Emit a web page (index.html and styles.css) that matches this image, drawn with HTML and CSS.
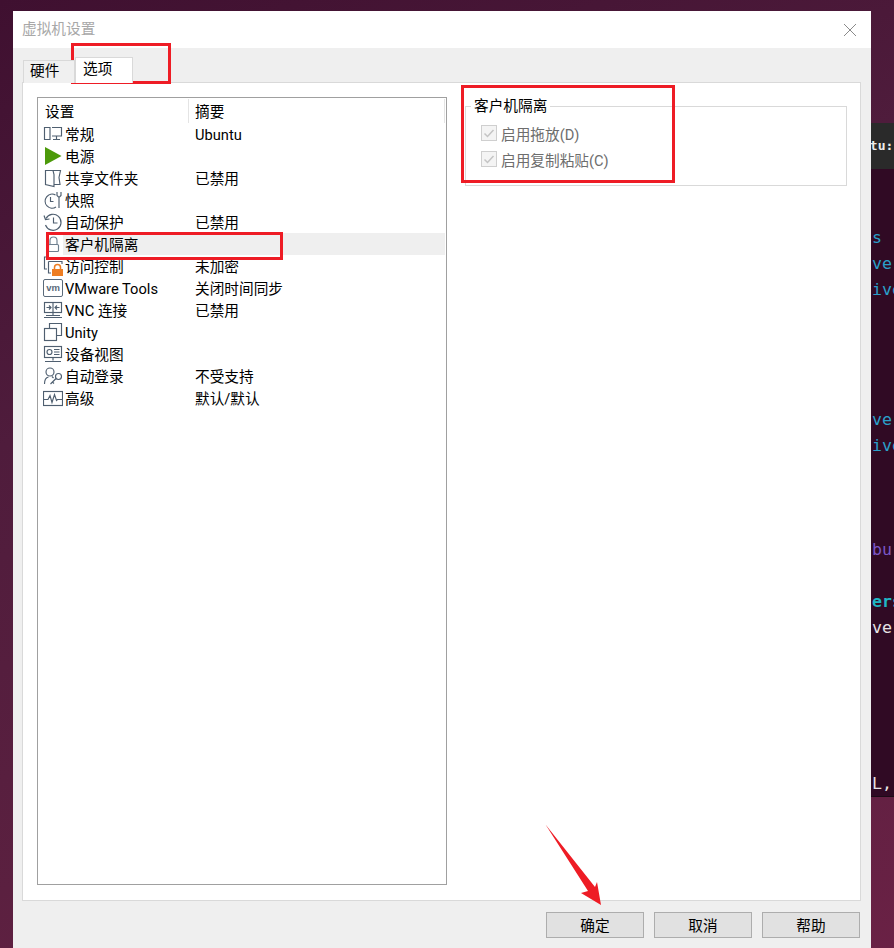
FILE: index.html
```html
<!DOCTYPE html>
<html lang="zh">
<head>
<meta charset="utf-8">
<title>虚拟机设置</title>
<link rel="stylesheet" href="styles.css">
</head>
<body>
<div class="desktop">
  <div class="terminal">
    <div class="term-title">ntu:</div>
    <div class="term-body">
      <div class="tl c-blue">s</div>
      <div class="tl c-blue">ver</div>
      <div class="tl c-blue">ive</div>
      <div class="tl"></div><div class="tl"></div><div class="tl"></div><div class="tl"></div>
      <div class="tl c-blue">ver</div>
      <div class="tl c-blue">ive</div>
      <div class="tl"></div><div class="tl"></div><div class="tl"></div>
      <div class="tl c-purple">bur</div>
      <div class="tl"></div>
      <div class="tl c-cyan">ers</div>
      <div class="tl c-white">ve</div>
      <div class="tl"></div><div class="tl"></div><div class="tl"></div><div class="tl"></div><div class="tl"></div>
      <div class="tl c-white">L,</div>
    </div>
  </div>

  <div class="dialog">
    <div class="titlebar">
      <span class="title">虚拟机设置</span>
      <svg class="close" width="14" height="14" viewBox="0 0 14 14"><path d="M1 1L13 13M13 1L1 13" stroke="#8a8a8a" stroke-width="1" fill="none"/></svg>
    </div>
    <div class="content">
      <div class="tabs">
        <div class="tab">硬件</div>
        <div class="tab tab-active">选项</div>
      </div>
      <div class="panel">
        <div class="list">
          <div class="list-head">
            <div class="head-a">设置</div>
            <div class="head-b">摘要</div>
            <div class="head-rest"></div>
          </div>
          <div class="row">
            <svg class="ico" viewBox="0 0 20 20"><g class="ln"><path d="M1.500 3.500h5.500v12H1.500z"/><path d="M9 3.500h9.500v8.500H9"/><path d="M13.500 12v3M10 15.500h7"/></g></svg>
            <span class="name">常规</span><span class="sum">Ubuntu</span>
          </div>
          <div class="row">
            <svg class="ico" viewBox="0 0 20 20"><path d="M2 1L18.500 10L2 19Z" fill="#4c9a0a"/></svg>
            <span class="name">电源</span>
          </div>
          <div class="row">
            <svg class="ico" viewBox="0 0 20 20"><g class="ln"><path d="M10 2.500h7.500l-1.500 7 1 7h-6"/><path d="M2.500 2.500h7.500l1 4v12l-8.500-2z"/></g></svg>
            <span class="name">共享文件夹</span><span class="sum">已禁用</span>
          </div>
          <div class="row">
            <svg class="ico" viewBox="0 0 20 20"><g class="ln"><path d="M12.500 5A7 7 0 1 0 13 17"/><path d="M7.500 7v4.500h3"/><path d="M16 8v10M14 2v3.500l2 2 2-2V2"/></g></svg>
            <span class="name">快照</span>
          </div>
          <div class="row">
            <svg class="ico" viewBox="0 0 20 20"><g class="ln"><path d="M3 6.500A8 8 0 1 1 2.500 13"/><path d="M1 3.500l1.500 4 4-.5"/><path d="M10.500 5.500v5.500h4"/></g></svg>
            <span class="name">自动保护</span><span class="sum">已禁用</span>
          </div>
          <div class="row row-sel">
            <svg class="ico" viewBox="0 0 20 20"><g class="ln-soft"><rect x="5.500" y="10.500" width="10" height="7" rx="1"/><path d="M7 10.500V6.500a3.500 3.500 0 0 1 7 0v4"/></g></svg>
            <span class="name name-sel">客户机隔离</span>
          </div>
          <div class="row">
            <svg class="ico" viewBox="0 0 20 20"><g class="ln"><path d="M4.500 1H1.500V13H4"/><path d="M5.500 5.500H19V8"/><path d="M5.500 5.500V17H8"/></g><rect x="9" y="13" width="11" height="7" fill="#ee7d22"/><path d="M11.500 13V11.500a3 3 0 0 1 6 0V13" fill="none" stroke="#ee7d22" stroke-width="1.500"/></svg>
            <span class="name">访问控制</span><span class="sum">未加密</span>
          </div>
          <div class="row">
            <svg class="ico" viewBox="0 0 20 20"><rect x="0.500" y="1.500" width="19" height="17" rx="1.500" fill="#fff" stroke="#5a6a7a"/><text x="10" y="13" class="vm">vm</text></svg>
            <span class="name">VMware Tools</span><span class="sum">关闭时间同步</span>
          </div>
          <div class="row">
            <svg class="ico" viewBox="0 0 20 20"><g class="ln"><rect x="1.500" y="2.500" width="17" height="10"/><path d="M10 2.500v10M3.500 7.500h4.500M6 5.500l2 2-2 2M16.500 7.500h-4.500M14 5.500l-2 2 2 2M10 12.500v3M1 17.500h18M3 15.500h14"/></g></svg>
            <span class="name">VNC 连接</span><span class="sum">已禁用</span>
          </div>
          <div class="row">
            <svg class="ico" viewBox="0 0 20 20"><g class="ln"><rect x="1.500" y="6.500" width="12" height="12"/><path d="M6.500 6.500V1.500h12v12h-5"/></g></svg>
            <span class="name">Unity</span>
          </div>
          <div class="row">
            <svg class="ico" viewBox="0 0 20 20"><g class="ln"><rect x="1.500" y="2.500" width="17" height="11"/><circle cx="6.500" cy="8" r="2.500"/><path d="M11 5.500h5.500M11 8h5.500M11 10.500h5.500M10 13.500v3M2 17.500h16"/></g></svg>
            <span class="name">设备视图</span>
          </div>
          <div class="row">
            <svg class="ico" viewBox="0 0 20 20"><g class="ln"><circle cx="7" cy="6" r="4"/><path d="M1.500 18c0-4 1.500-6.500 4-7M9 10.500l1.500 1.500"/><circle cx="15.500" cy="10.500" r="3"/><path d="M13 12.500L7.500 18M9.500 16l1.500 1.500"/></g></svg>
            <span class="name">自动登录</span><span class="sum">不受支持</span>
          </div>
          <div class="row">
            <svg class="ico" viewBox="0 0 20 20"><g class="ln"><rect x="0.500" y="3.500" width="19" height="14"/><path d="M1 11.500h4l2-4 2 7 2.500-8 2 6 1-1H19"/></g></svg>
            <span class="name">高级</span><span class="sum">默认/默认</span>
          </div>
        </div>
        <div class="side">
          <fieldset class="group">
            <legend class="legend">客户机隔离</legend>
            <label class="check"><span class="box"><svg width="14" height="14" viewBox="0 0 14 14"><path d="M2.500 7.500L5.500 10.500L11.500 4" fill="none" stroke="#c4c4c4" stroke-width="1.500"/></svg></span>启用拖放(D)</label>
            <label class="check"><span class="box"><svg width="14" height="14" viewBox="0 0 14 14"><path d="M2.500 7.500L5.500 10.500L11.500 4" fill="none" stroke="#c4c4c4" stroke-width="1.500"/></svg></span>启用复制粘贴(C)</label>
          </fieldset>
        </div>
      </div>
      <div class="buttons">
        <button class="btn">确定</button>
        <button class="btn">取消</button>
        <button class="btn">帮助</button>
      </div>
    </div>
  </div>

  <div class="mark mark-tab"></div>
  <div class="mark mark-row"></div>
  <div class="mark mark-group"></div>
  <svg class="arrow" width="894" height="948" viewBox="0 0 894 948"><path d="M545.500 824.500L595 887L597 882L601 905L581 893L588 891Z" fill="#ee1c25"/></svg>
</div>
</body>
</html>
```

FILE: styles.css
```css
* { box-sizing: border-box; }
html, body { margin: 0; padding: 0; }
body {
  width: 894px;
  height: 948px;
  overflow: hidden;
  font-family: "Roboto", "Noto Sans CJK SC", sans-serif;
  font-size: 14.67px;
  color: #000;
}
.desktop {
  position: relative;
  width: 894px;
  height: 948px;
  overflow: hidden;
  background: linear-gradient(160deg, #3f1030 0%, #4f1c3c 35%, #5b2040 70%, #6a2145 100%);
}
.terminal {
  position: absolute;
  left: 860px;
  top: 123px;
  width: 34px;
  height: 674px;
  background: #300a24;
  border-bottom: 1px solid #1c0a16;
  font-family: "DejaVu Sans Mono", monospace;
  font-size: 16.600px;
  overflow: hidden;
}
.term-title {
  height: 46px;
  line-height: 46px;
  padding-left: 2px;
  background: #2a2a2a;
  color: #ececec;
  font-weight: 700;
  font-size: 13px;
}
.term-body { padding-top: 56px; }
.tl { height: 26px; line-height: 26px; padding-left: 12px; white-space: nowrap; }
.c-blue { color: #2a9fc9; }
.c-purple { color: #7a56c4; }
.c-cyan { color: #1fb6c4; font-weight: 700; }
.c-white { color: #e6e2e4; }

.dialog {
  position: absolute;
  left: 13px;
  top: 11px;
  width: 858px;
  height: 937px;
  background: #efefef;
  display: flex;
  flex-direction: column;
}
.titlebar {
  height: 37px;
  flex: none;
  background: #fff;
  display: flex;
  align-items: center;
  justify-content: space-between;
  padding: 0 14px 0 9px;
}
.title { color: #a8a8a8; margin-bottom: 4px; }
.close { display: block; }
.content {
  flex: 1;
  display: flex;
  flex-direction: column;
  padding: 9px 10px 0 9px;
}
.tabs {
  height: 26px;
  flex: none;
  display: flex;
  align-items: flex-end;
  padding-left: 1px;
  position: relative;
  z-index: 1;
}
.tab {
  width: 52px;
  height: 23px;
  line-height: 21px;
  padding-left: 6px;
  border: 1px solid #d9d9d9;
  border-bottom: 0;
  background: #f0f0f0;
}
.tab-active {
  width: 58px;
  height: 26px;
  line-height: 23px;
  padding-left: 7px;
  background: #fff;
}
.panel {
  height: 819px;
  flex: none;
  background: #fff;
  border: 1px solid #d9d9d9;
  margin-top: -1px;
  padding: 14px 12px 14px 14px;
  display: flex;
  gap: 18px;
}
.list {
  width: 410px;
  height: 788px;
  flex: none;
  border: 1px solid #a0a0a0;
  background: #fff;
}
.list-head {
  height: 25px;
  display: flex;
  align-items: center;
}
.head-a { width: 151px; padding-left: 7px; height: 24px; line-height: 26px; border-right: 1px solid #e4e4e4; }
.head-b { width: 256px; padding-left: 6px; height: 24px; line-height: 26px; border-right: 1px solid #e4e4e4; }
.head-rest { flex: 1; }
.row {
  height: 22px;
  display: flex;
  align-items: center;
  padding-left: 5px;
  white-space: nowrap;
}
.row-sel { width: 407px; }
.ico { width: 20px; height: 20px; flex: none; display: block; }
.ln { fill: none; stroke: #4f5f70; stroke-width: 1.150; }
.ln-soft { fill: none; stroke: #6f8090; stroke-width: 1.150; }
.vm { font-family: "Liberation Sans", sans-serif; font-size: 9.500px; font-weight: 700; fill: #5a6a7a; text-anchor: middle; }
.name { width: 132px; padding-left: 2px; flex: none; height: 22px; line-height: 24px; }
.name-sel { width: 382px; background: #efefef; }
.sum { height: 22px; line-height: 24px; }
.side { flex: 1; padding-top: 9px; }
.group {
  margin: -10px 0 0;
  padding: 0 0 0 15px;
  height: 90px;
  width: 382px;
  border: 1px solid #d9d9d9;
}
.legend {
  padding: 0 3px;
  margin-left: -10px;
  line-height: 21px;
  color: #000;
}
.check {
  display: flex;
  align-items: center;
  gap: 4px;
  height: 26px;
  color: #6d6d6d;
  position: relative;
  top: 3px;
}
.box {
  width: 16px;
  height: 16px;
  border: 1px solid #cfcfcf;
  background: #f4f4f4;
  display: flex;
  align-items: center;
  justify-content: center;
}
.buttons {
  display: flex;
  justify-content: flex-end;
  gap: 10px;
  padding-top: 11px;
  padding-right: 1px;
}
.btn {
  width: 98px;
  height: 26px;
  padding: 0 0 2px;
  border: 1px solid #adadad;
  background: #e1e1e1;
  font: inherit;
  color: #000;
}
.mark {
  position: absolute;
  border: 3px solid #ee1c25;
}
.mark-tab { left: 71px; top: 43px; width: 100px; height: 41px; }
.mark-row { left: 46px; top: 232px; width: 237px; height: 28px; }
.mark-group { left: 461px; top: 85px; width: 214px; height: 98px; }
.arrow { position: absolute; left: 0; top: 0; pointer-events: none; }
```
